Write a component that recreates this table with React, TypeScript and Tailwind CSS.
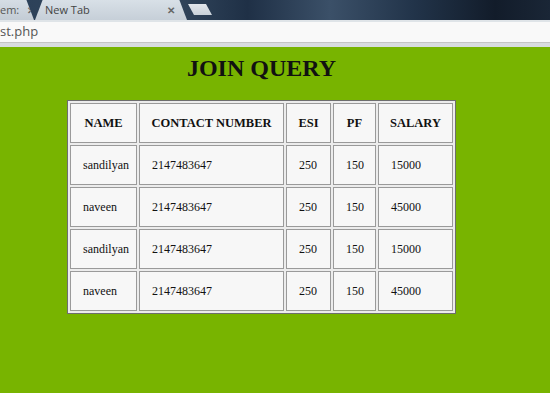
import React from "react";

const rows = [
  { name: "sandilyan", contact: "2147483647", esi: "250", pf: "150", salary: "15000" },
  { name: "naveen", contact: "2147483647", esi: "250", pf: "150", salary: "45000" },
  { name: "sandilyan", contact: "2147483647", esi: "250", pf: "150", salary: "15000" },
  { name: "naveen", contact: "2147483647", esi: "250", pf: "150", salary: "45000" },
];

const th =
  "h-[40px] border border-[#9a9a9a] bg-[#f7f7f7] p-0 text-center align-middle text-[12.5px] font-bold text-[#111]";
const td =
  "h-[40px] border border-[#9a9a9a] bg-[#f7f7f7] px-[12px] text-left align-middle text-[12px] text-[#111] whitespace-nowrap";

export default function App() {
  return (
    <div className="w-[550px] h-[393px] overflow-hidden flex flex-col bg-[#78b400]">
      {/* browser chrome: tabs */}
      <div className="relative h-[20px] shrink-0 bg-[linear-gradient(90deg,#2b4058_0%,#34495f_30%,#1f3046_45%,#3b5068_60%,#22344a_75%,#121c2a_90%,#1a2636_100%)]">
        <div className="absolute left-[-20px] top-0 h-[20px] w-[54px] bg-[linear-gradient(180deg,#d5dde4,#c3ccd5)] [clip-path:polygon(0_0,86%_0,100%_100%,0_100%)] font-['Open_Sans',sans-serif] text-[11px] text-[#555] flex items-center">
          <span className="pl-[20px]">em:</span>
          <span className="ml-[8px] text-[10px] font-bold text-[#666]">✕</span>
        </div>
        <div className="absolute left-[35px] top-0 h-[20px] w-[152px] bg-[linear-gradient(180deg,#d8e0e7,#c6cfd8)] [clip-path:polygon(5%_0,95%_0,100%_100%,0_100%)] font-['Open_Sans',sans-serif] text-[11px] text-[#444] flex items-center">
          <span className="pl-[10px]">New Tab</span>
          <span className="ml-auto mr-[12px] text-[10px] font-bold text-[#666]">✕</span>
        </div>
        <div className="absolute left-[188px] top-[4px] h-[11px] w-[24px] bg-[linear-gradient(180deg,#e2e7ec,#c9d1d9)] [clip-path:polygon(0_0,75%_0,100%_100%,25%_100%)]" />
      </div>
      {/* address bar */}
      <div className="h-[27px] shrink-0 bg-[#e4e8ec] flex flex-col">
        <div className="h-[2px] bg-[#dfe4e8]" />
        <div className="h-[21px] bg-[#f9f9f9] border-b border-[#c4c4c4] flex items-center font-['Open_Sans',sans-serif] text-[13px] text-[#555]">
          st.php
        </div>
        <div className="flex-1 bg-[#d9dcdf]" />
      </div>
      {/* page */}
      <div className="flex-1 flex flex-col items-center pr-[27px] font-['Liberation_Serif',serif]">
        <h1 className="mt-[7px] text-[24px] leading-[28px] font-bold text-[#111]">JOIN QUERY</h1>
        <table className="mt-[18px] w-[389px] table-fixed border-separate border-spacing-[2px] border border-[#6e6e6e] bg-[#ececec]">
          <thead>
            <tr>
              <th className={`${th} w-[67px]`}>NAME</th>
              <th className={`${th} w-[145px]`}>CONTACT NUMBER</th>
              <th className={`${th} w-[45px]`}>ESI</th>
              <th className={`${th} w-[43px]`}>PF</th>
              <th className={`${th} w-[75px]`}>SALARY</th>
            </tr>
          </thead>
          <tbody>
            {rows.map((r, i) => (
              <tr key={i}>
                <td className={td}>{r.name}</td>
                <td className={td}>{r.contact}</td>
                <td className={td}>{r.esi}</td>
                <td className={td}>{r.pf}</td>
                <td className={td}>{r.salary}</td>
              </tr>
            ))}
          </tbody>
        </table>
      </div>
    </div>
  );
}
